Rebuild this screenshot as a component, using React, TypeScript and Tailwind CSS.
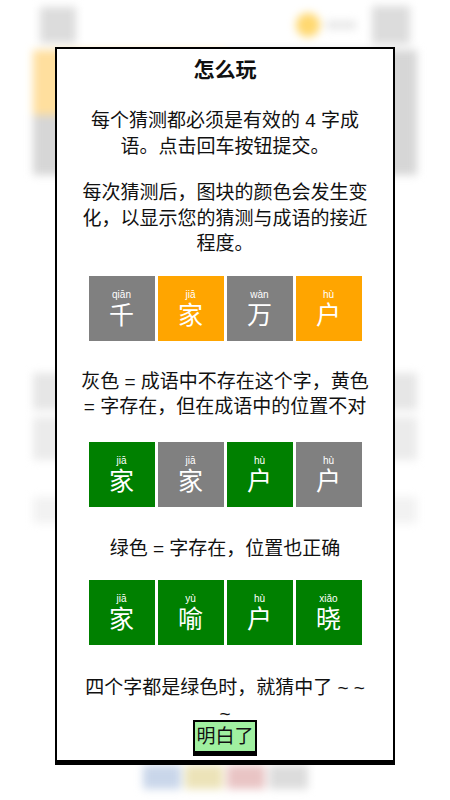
import React from "react";

type Tile = { py: string; ch: string; color: "gray" | "yellow" | "green" };

const tileColors = {
  gray: "bg-[#808080]",
  yellow: "bg-[#ffa500]",
  green: "bg-[#008000]",
};

function TileRow({ tiles, className }: { tiles: Tile[]; className?: string }) {
  return (
    <div className={`flex justify-center gap-[3px] ${className ?? ""}`}>
      {tiles.map((t, i) => (
        <div
          key={i}
          className={`flex h-[65px] w-[66px] flex-col items-center gap-[3px] pt-[14px] text-white ${tileColors[t.color]}`}
        >
          <span className="text-[10px] leading-[10px]">{t.py}</span>
          <span className="text-[25px] leading-[25px]">{t.ch}</span>
        </div>
      ))}
    </div>
  );
}

function Background() {
  return (
    <div className="flex h-full flex-col blur-[4px]">
      <div className="flex h-[50px] items-center justify-between px-[40px]">
        <div className="h-[36px] w-[36px] bg-[#dcdcdc]" />
        <div className="flex items-center gap-[6px]">
          <div className="h-[24px] w-[24px] rounded-full bg-[#ffd870]" />
          <div className="h-[8px] w-[30px] bg-[#e6e6e6]" />
          <div className="ml-[10px] h-[38px] w-[38px] bg-[#dcdcdc]" />
        </div>
      </div>
      <div className="px-[33px]">
        <div className="grid h-[65px] grid-cols-2">
          <div className="bg-[#ffdf9e]" />
          <div className="bg-[#d6d6d6]" />
        </div>
        <div className="h-[60px] bg-[#d6d6d6]" />
      </div>
      <div className="mt-[198px] flex flex-col gap-[7px] px-[33px]">
        <div className="h-[37px] bg-[#e6e6e6]" />
        <div className="h-[43px] bg-[#ebebeb]" />
        <div className="mt-[30px] h-[26px] bg-[#f2f2f2]" />
      </div>
      <div className="mx-auto mt-[242px] flex h-[24px] w-[165px] gap-[4px]">
        <div className="flex-1 bg-[#c9d6ea]" />
        <div className="flex-1 bg-[#ece3b8]" />
        <div className="flex-1 bg-[#e9c4c4]" />
        <div className="flex-1 bg-[#dcdcdc]" />
      </div>
    </div>
  );
}

export default function App() {
  const row1: Tile[] = [
    { py: "qiān", ch: "千", color: "gray" },
    { py: "jiā", ch: "家", color: "yellow" },
    { py: "wàn", ch: "万", color: "gray" },
    { py: "hù", ch: "户", color: "yellow" },
  ];
  const row2: Tile[] = [
    { py: "jiā", ch: "家", color: "green" },
    { py: "jiā", ch: "家", color: "gray" },
    { py: "hù", ch: "户", color: "green" },
    { py: "hù", ch: "户", color: "gray" },
  ];
  const row3: Tile[] = [
    { py: "jiā", ch: "家", color: "green" },
    { py: "yù", ch: "喻", color: "green" },
    { py: "hù", ch: "户", color: "green" },
    { py: "xiǎo", ch: "晓", color: "green" },
  ];

  return (
    <div className="relative h-[800px] w-full overflow-hidden bg-white font-['Liberation_Sans','Noto_Sans_CJK_SC',sans-serif]">
      <Background />

      <div className="absolute inset-0 flex justify-center">
        <div className="mt-[47px] h-[715px] w-[340px] border-2 border-black bg-white px-[22px] pt-[7px] text-center text-[#111] shadow-[0_3px_0_#000]">
          <h2 className="text-[21px] leading-[28px] font-bold">怎么玩</h2>
          <p className="mt-[24px] text-[19px] leading-[25.5px]">
            每个猜测都必须是有效的 4 字成语。点击回车按钮提交。
          </p>
          <p className="mt-[21px] text-[19px] leading-[25.5px]">
            每次猜测后，图块的颜色会发生变化，以显示您的猜测与成语的接近程度。
          </p>
          <TileRow tiles={row1} className="mt-[19px]" />
          <p className="mt-[28px] text-[19px] leading-[25.5px]">
            灰色 = 成语中不存在这个字，黄色 = 字存在，但在成语中的位置不对
          </p>
          <TileRow tiles={row2} className="mt-[22px]" />
          <p className="mt-[29px] text-[19px] leading-[25.5px]">
            绿色 = 字存在，位置也正确
          </p>
          <TileRow tiles={row3} className="mt-[19px]" />
          <p className="mt-[30px] text-[19px] leading-[25.5px]">
            四个字都是绿色时，就猜中了 ~ ~ ~
          </p>
          <button className="mx-auto -mt-[6px] block h-[33px] w-[64px] border-2 border-black bg-[#a0f0a0] text-[19px] leading-none text-[#111] shadow-[0_3px_0_#000]">
            明白了
          </button>
        </div>
      </div>
    </div>
  );
}
